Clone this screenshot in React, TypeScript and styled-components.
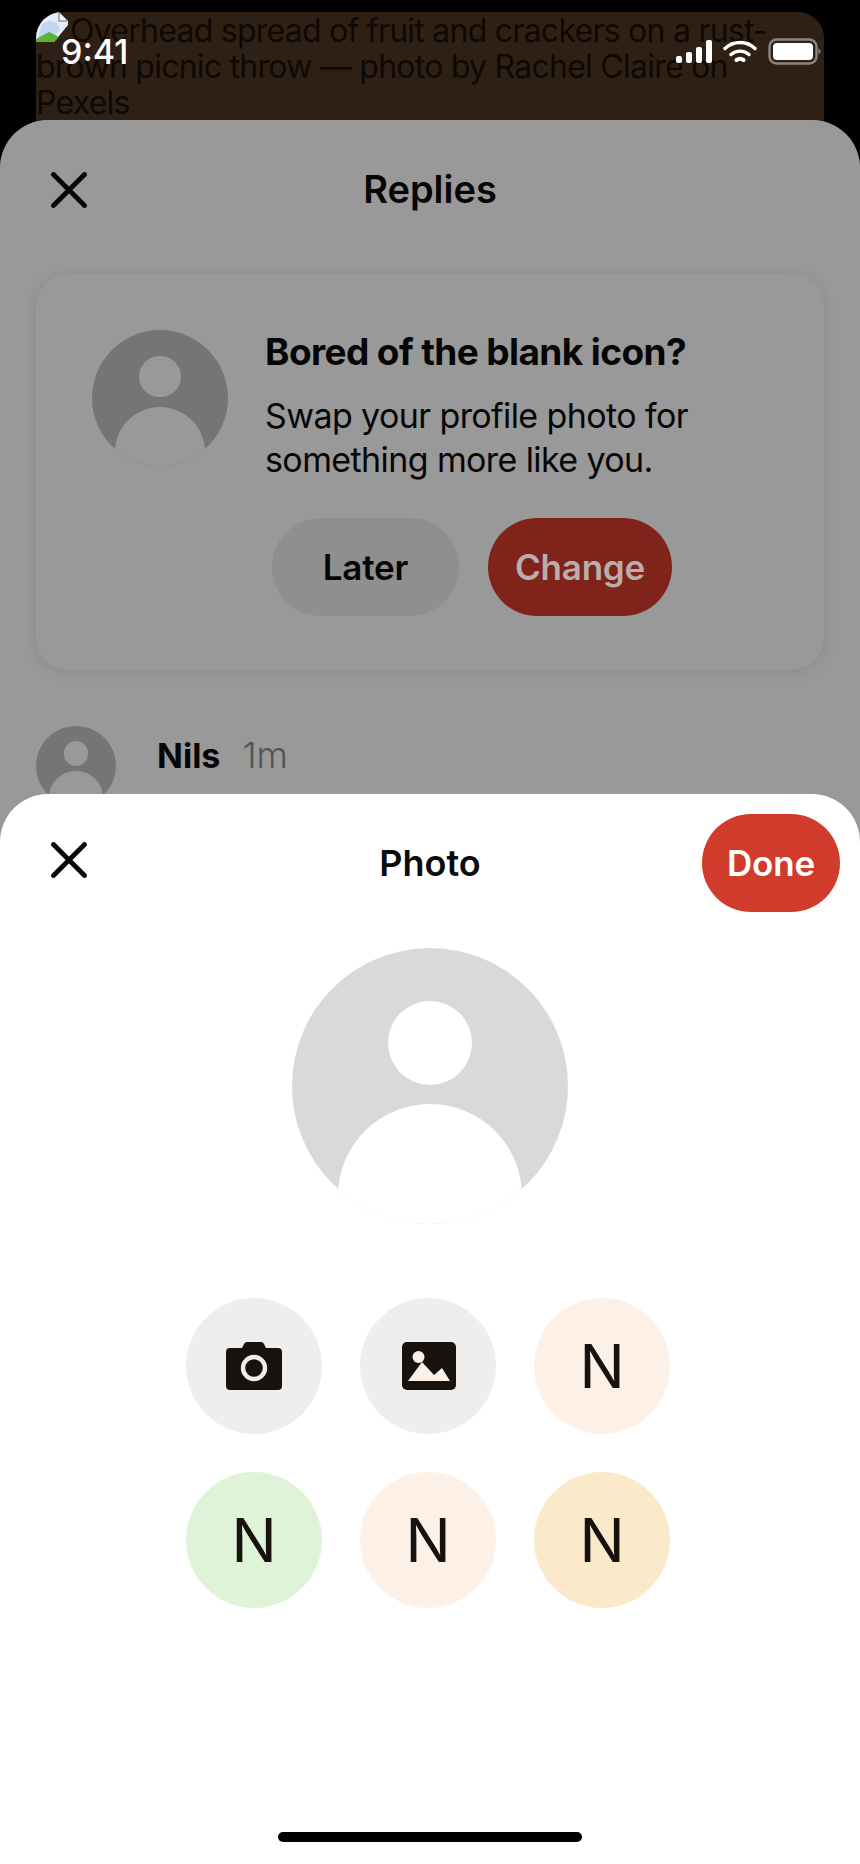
import styled, { createGlobalStyle } from "styled-components";

const swatches = ["#fdf0e6", "#dff3d8", "#fdf0e6", "#faeaca"];

const CloseIcon = () => (
  <svg width="36" height="36" viewBox="0 0 36 36" fill="none">
    <path d="M2.5 2.5 L33.5 33.5 M33.5 2.5 L2.5 33.5" stroke="currentColor" strokeWidth="4.8" strokeLinecap="round" />
  </svg>
);

const BrokenImageIcon = () => (
  <BrokenImage width="32" height="32" viewBox="0 0 32 32">
    <path d="M0 0 H23 L32 9 V13 L18 30 H0 Z" fill="#e6edf6" />
    <path d="M6 12 Q14 6 22 12 L24 18 L16 26 H2 Z" fill="#c3d6ef" />
    <path d="M0 30 V27 L13 20 L23 25 L18 30 Z" fill="#57b436" />
    <path d="M23 1 V9 H31" fill="#f4f4f4" stroke="#9c9c9c" strokeWidth="1.6" />
  </BrokenImage>
);

const SignalIcon = () => (
  <svg width="36" height="24" viewBox="0 0 36 24" fill="#fff">
    <rect x="0" y="16" width="6" height="7" rx="2" />
    <rect x="10" y="12" width="6" height="11" rx="2" />
    <rect x="20" y="7" width="6" height="16" rx="2" />
    <rect x="30" y="0" width="6" height="23" rx="2" />
  </svg>
);

const WifiIcon = () => (
  <svg width="34" height="24" viewBox="0 0 34 24" fill="none" stroke="#fff" strokeWidth="3.4" strokeLinecap="round">
    <path d="M2 8.5 C10.5 0.5 23.5 0.5 32 8.5" />
    <path d="M8 14.5 C13 10 21 10 26 14.5" />
    <path d="M13.5 20 C15.5 18.6 18.5 18.6 20.5 20" strokeWidth="4" />
  </svg>
);

const BatteryIcon = () => (
  <svg width="54" height="28" viewBox="0 0 54 28" fill="none">
    <rect x="1.5" y="1.5" width="47" height="24" rx="7" stroke="#8f857c" strokeWidth="2.4" />
    <rect x="5" y="5" width="40" height="17" rx="4" fill="#fff" />
    <path d="M50.5 10 L53 13.5 L50.5 17 Z" fill="#8f857c" />
  </svg>
);

const CameraIcon = () => (
  <svg width="56" height="48" viewBox="0 0 56 48">
    <path
      d="M21 0 H35 Q37 0 38 2 L40 6 H52 Q56 6 56 10 V44 Q56 48 52 48 H4 Q0 48 0 44 V10 Q0 6 4 6 H16 L18 2 Q19 0 21 0 Z"
      fill="#17120e"
    />
    <circle cx="28" cy="26" r="11" fill="none" stroke="#eeeeee" strokeWidth="4.4" />
  </svg>
);

const PictureIcon = () => (
  <svg width="56" height="48" viewBox="-2 0 56 48">
    <rect width="54" height="48" rx="5" fill="#17120e" />
    <circle cx="16.5" cy="15" r="6" fill="#fdf0e6" />
    <path d="M6 39 L20 20 L32 33 L40 26 L48 39 Z" fill="#fdf0e6" />
  </svg>
);

const Avatar = ({ size, fill }: { size: number; fill: string }) => (
  <AvatarCircle $size={size} $fill={fill}>
    <AvatarHead $size={size} />
    <AvatarBody $size={size} />
  </AvatarCircle>
);

export default function App() {
  return (
    <>
      <GlobalStyle />
      <Phone>
        <PhotoFrame>
          <BrokenImageIcon />
          Overhead spread of fruit and crackers on a rust-brown picnic throw — photo by Rachel Claire on Pexels
        </PhotoFrame>

        <StatusBar>
          <Clock>9:41</Clock>
          <StatusIcons>
            <SignalIcon />
            <WifiIcon />
            <BatteryIcon />
          </StatusIcons>
        </StatusBar>

        <RepliesSheet>
          <RepliesHeader>
            <CloseSlot>
              <CloseIcon />
            </CloseSlot>
            <RepliesTitle>Replies</RepliesTitle>
          </RepliesHeader>

          <PromptCard>
            <Avatar size={136} fill="#c4c4c4" />
            <PromptBody>
              <PromptTitle>Bored of the blank icon?</PromptTitle>
              <PromptText>
                Swap your profile photo for
                <br />
                something more like you.
              </PromptText>
              <PromptActions>
                <PillButton $width={187} $tone="muted">
                  Later
                </PillButton>
                <PillButton $width={184} $tone="dimmed">
                  Change
                </PillButton>
              </PromptActions>
            </PromptBody>
          </PromptCard>

          <ReplyRow>
            <Avatar size={80} fill="#c4c4c4" />
            <ReplyName>Nils</ReplyName>
            <ReplyTime>1m</ReplyTime>
          </ReplyRow>
        </RepliesSheet>

        <PhotoSheet>
          <PhotoHeader>
            <PhotoClose>
              <CloseIcon />
            </PhotoClose>
            <PhotoTitle>Photo</PhotoTitle>
            <DoneSlot>
              <PillButton $width={138} $tone="accent">
                Done
              </PillButton>
            </DoneSlot>
          </PhotoHeader>

          <LargeAvatarSlot>
            <Avatar size={276} fill="#d9d9d9" />
          </LargeAvatarSlot>

          <ChoiceGrid>
            <Choice $bg="#eeeeee">
              <CameraIcon />
            </Choice>
            <Choice $bg="#eeeeee">
              <PictureIcon />
            </Choice>
            {swatches.map((color, i) => (
              <Choice key={i} $bg={color}>
                N
              </Choice>
            ))}
          </ChoiceGrid>

          <HomeIndicator />
        </PhotoSheet>
      </Phone>
    </>
  );
}

const pillTones = {
  muted: "background: #eeeeee; color: #0b0b0b;",
  accent: "background: #d03b2c; color: #ffffff;",
  // sits above the sheet's scrim, so it carries its dimmed colours itself
  dimmed: "position: relative; z-index: 1; background: #80231a; color: #b9aeac;",
};

const GlobalStyle = createGlobalStyle`
  html, body {
    margin: 0;
    padding: 0;
    background: #000;
  }
  * {
    box-sizing: border-box;
  }
  body {
    font-family: Inter, "Liberation Sans", sans-serif;
    color: #0b0b0b;
  }
`;

const Phone = styled.div`
  position: relative;
  width: 860px;
  height: 1864px;
  overflow: hidden;
  background: #000;
`;

const PhotoFrame = styled.div`
  width: 788px;
  height: 300px;
  margin: 12px 36px 0;
  padding: 1px 30px 0 0;
  border-radius: 26px;
  overflow: hidden;
  background: #2f2015;
  color: #0e0905;
  font-size: 32px;
  letter-spacing: -0.75px;
  line-height: 36px;
`;

const BrokenImage = styled.svg`
  display: inline-block;
  vertical-align: top;
  margin: -1px 2px 0 0;
`;

const StatusBar = styled.div`
  position: absolute;
  top: 34px;
  left: 61px;
  right: 38px;
  display: flex;
  align-items: center;
  justify-content: space-between;
  color: #fff;
`;

const Clock = styled.span`
  font-size: 34px;
  font-weight: 500;
  line-height: 36px;
`;

const StatusIcons = styled.div`
  display: flex;
  align-items: center;
  gap: 11px;
`;

const RepliesSheet = styled.section`
  position: absolute;
  inset: 120px 0 0;
  padding: 0 36px;
  border-radius: 48px 48px 0 0;
  overflow: hidden;
  background: #ffffff;

  &::after {
    content: "";
    position: absolute;
    inset: 0;
    background: rgba(0, 0, 0, 0.4);
  }
`;

const RepliesHeader = styled.header`
  position: relative;
  display: flex;
  align-items: center;
  justify-content: center;
  height: 138px;
  margin-bottom: 16px;
`;

const CloseSlot = styled.div`
  position: absolute;
  left: 15px;
  top: 52px;
  display: flex;
  color: #0b0b0b;
`;

const RepliesTitle = styled.h1`
  margin: 0;
  font-size: 38px;
  font-weight: 600;
  line-height: 44px;
`;

const PromptCard = styled.div`
  display: flex;
  align-items: flex-start;
  gap: 37px;
  height: 396px;
  padding: 56px;
  border-radius: 32px;
  background: #ffffff;
  box-shadow: 0 2px 14px rgba(0, 0, 0, 0.1);
`;

const AvatarCircle = styled.div<{ $size: number; $fill: string }>`
  position: relative;
  flex: none;
  width: ${({ $size }) => $size}px;
  height: ${({ $size }) => $size}px;
  border-radius: 50%;
  overflow: hidden;
  background: ${({ $fill }) => $fill};
`;

const AvatarHead = styled.div<{ $size: number }>`
  position: absolute;
  left: 50%;
  top: ${({ $size }) => $size * 0.192}px;
  width: ${({ $size }) => $size * 0.304}px;
  height: ${({ $size }) => $size * 0.304}px;
  margin-left: ${({ $size }) => $size * -0.152}px;
  border-radius: 50%;
  background: #ffffff;
`;

const AvatarBody = styled.div<{ $size: number }>`
  position: absolute;
  left: 50%;
  top: ${({ $size }) => $size * 0.565}px;
  width: ${({ $size }) => $size * 0.666}px;
  height: ${({ $size }) => $size * 0.666}px;
  margin-left: ${({ $size }) => $size * -0.333}px;
  border-radius: 50%;
  background: #ffffff;
`;

const PromptBody = styled.div`
  display: flex;
  flex-direction: column;
  min-width: 0;
`;

const PromptTitle = styled.h2`
  margin: 0;
  font-size: 37px;
  font-weight: 700;
  letter-spacing: -0.6px;
  line-height: 44px;
`;

const PromptText = styled.p`
  margin: 20px 0 0;
  font-size: 34px;
  font-weight: 400;
  letter-spacing: -0.6px;
  line-height: 44px;
  white-space: nowrap;
`;

const PromptActions = styled.div`
  display: flex;
  gap: 29px;
  margin: 36px 0 0 7px;
`;

const PillButton = styled.button<{ $width: number; $tone: keyof typeof pillTones }>`
  flex: none;
  width: ${({ $width }) => $width}px;
  height: 98px;
  padding: 0;
  border: 0;
  border-radius: 49px;
  font-family: inherit;
  font-size: 35px;
  font-weight: 600;
  letter-spacing: -0.2px;
  ${({ $tone }) => pillTones[$tone]}
`;

const ReplyRow = styled.div`
  display: flex;
  align-items: flex-start;
  margin-top: 56px;
`;

const ReplyName = styled.span`
  margin: 10px 0 0 41px;
  font-size: 34px;
  font-weight: 700;
  line-height: 40px;
`;

const ReplyTime = styled.span`
  margin: 9px 0 0 22px;
  color: #8a8a8a;
  font-size: 36px;
  font-weight: 300;
  line-height: 40px;
`;

const PhotoSheet = styled.section`
  position: absolute;
  inset: 794px 0 0;
  display: flex;
  flex-direction: column;
  align-items: center;
  padding-top: 20px;
  border-radius: 48px 48px 0 0;
  background: #ffffff;
`;

const PhotoHeader = styled.header`
  display: grid;
  grid-template-columns: 1fr auto 1fr;
  align-items: center;
  width: 100%;
  height: 98px;
  padding: 0 20px;
`;

const PhotoClose = styled.div`
  display: flex;
  margin: 0 0 6px 31px;
  color: #0b0b0b;
`;

const PhotoTitle = styled.h2`
  margin: 0;
  font-size: 36px;
  font-weight: 600;
  line-height: 44px;
`;

const DoneSlot = styled.div`
  display: flex;
  justify-content: flex-end;
`;

const LargeAvatarSlot = styled.div`
  margin-top: 36px;
`;

const ChoiceGrid = styled.div`
  display: grid;
  grid-template-columns: repeat(3, 136px);
  gap: 38px;
  margin: 74px 4px 0 0;
`;

const Choice = styled.div<{ $bg: string }>`
  display: flex;
  align-items: center;
  justify-content: center;
  width: 136px;
  height: 136px;
  border-radius: 50%;
  background: ${({ $bg }) => $bg};
  color: #17120e;
  font-size: 60px;
  font-weight: 400;
`;

const HomeIndicator = styled.div`
  width: 304px;
  height: 10px;
  margin-top: auto;
  margin-bottom: 22px;
  border-radius: 5px;
  background: #000;
`;
